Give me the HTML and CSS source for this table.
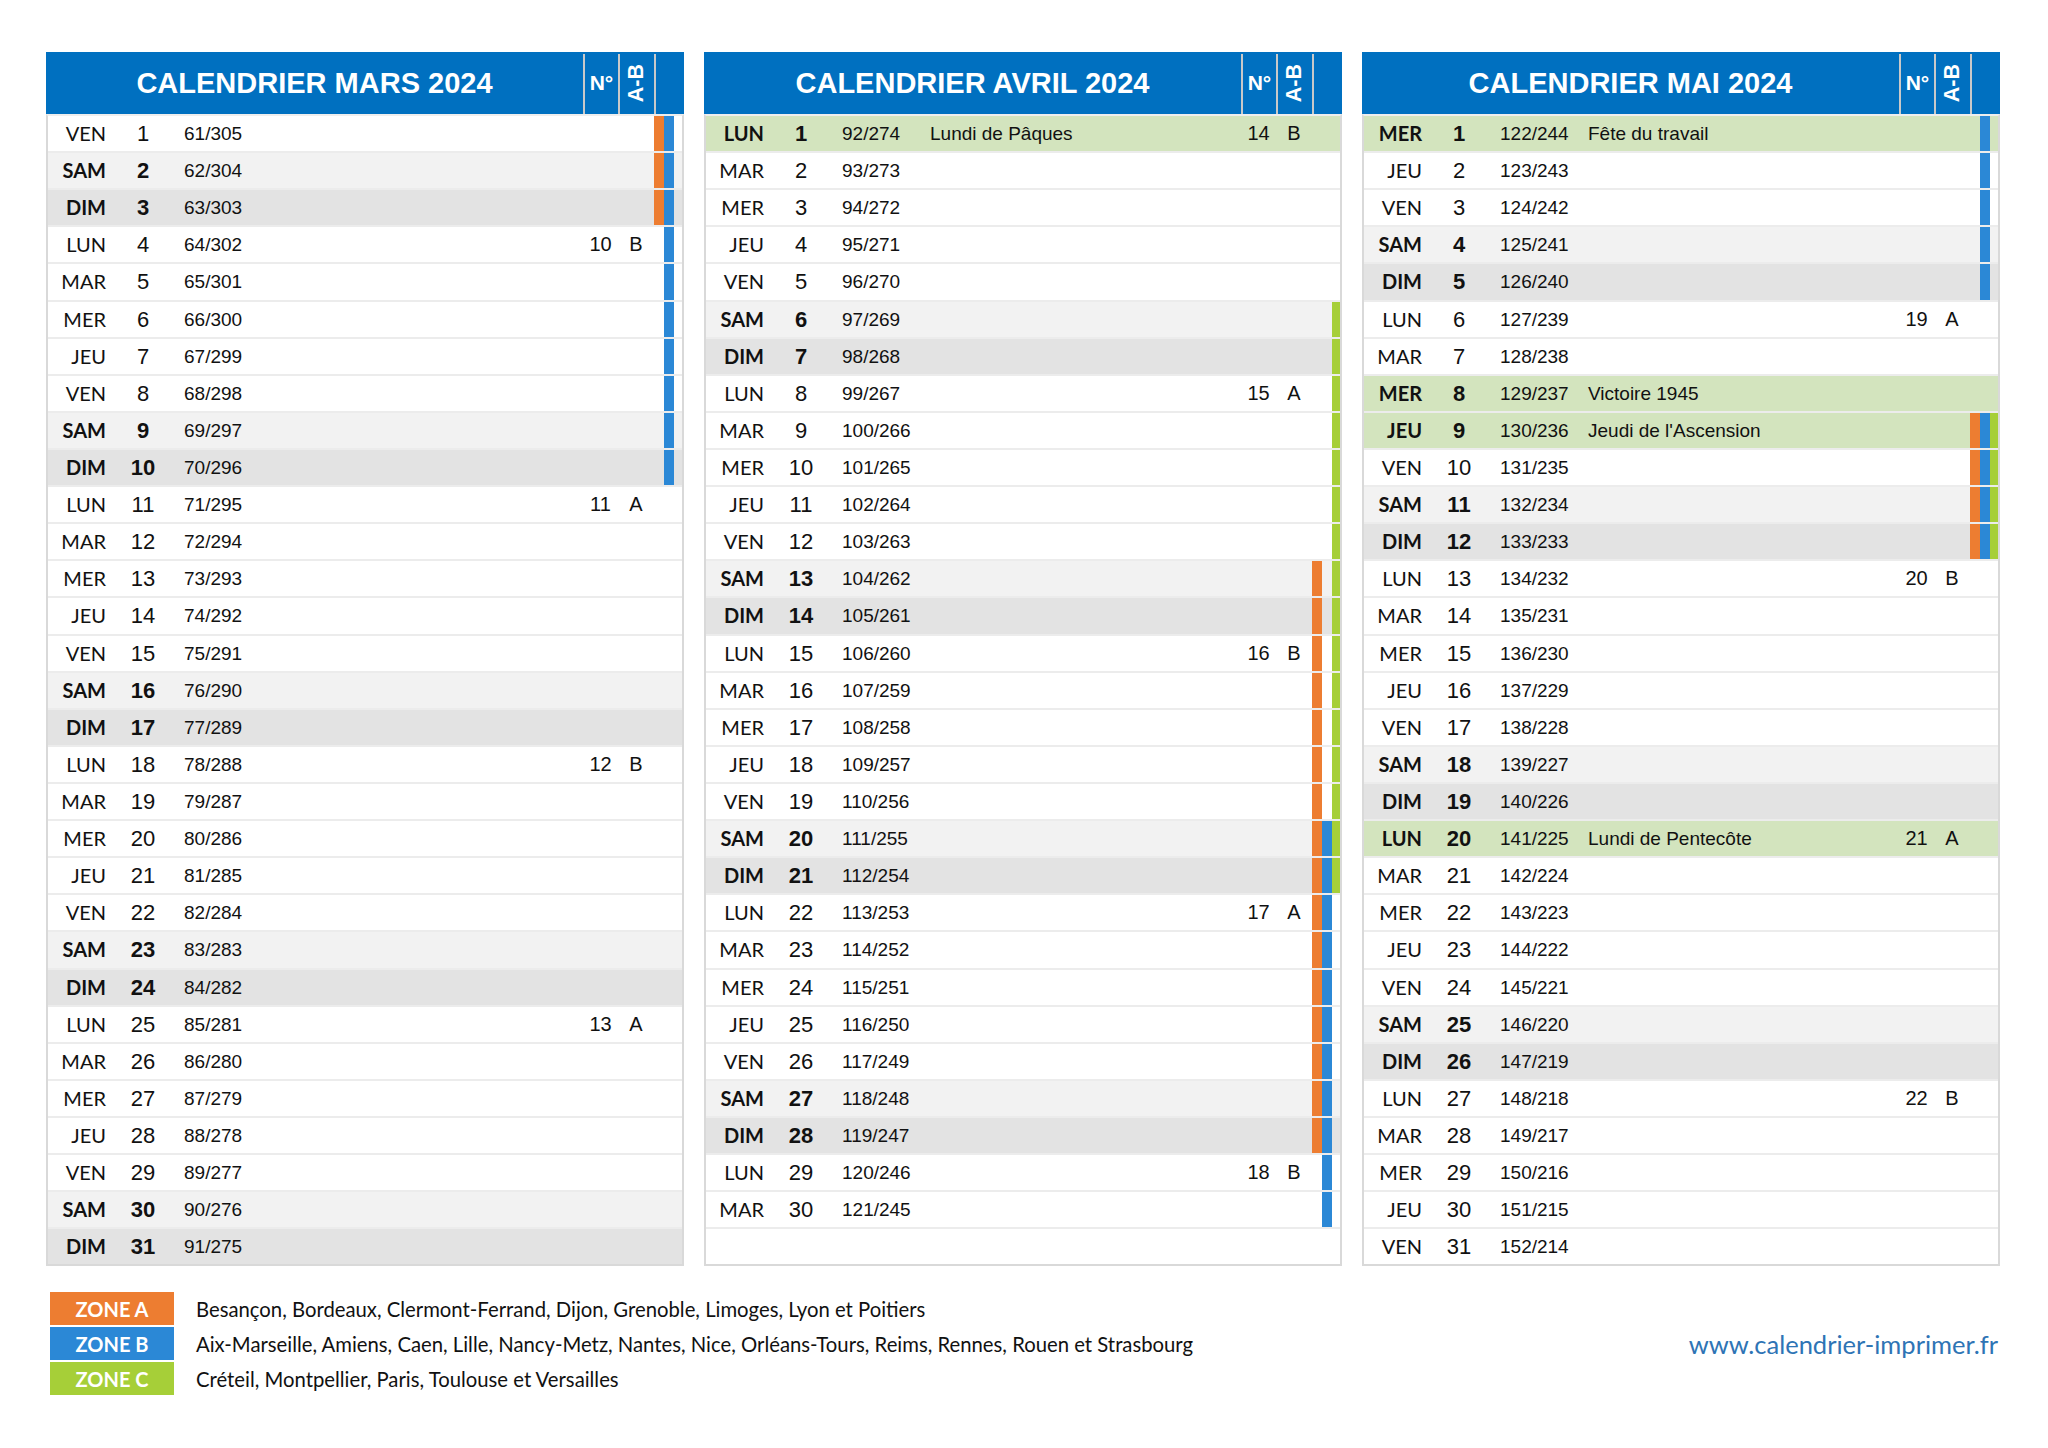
FILE: index.html
```html
<!DOCTYPE html>
<html lang="fr">
<head>
<meta charset="utf-8">
<title>Calendrier Mars Avril Mai 2024</title>
<link rel="stylesheet" href="styles.css">
</head>
<body>
<div class="page">
  <div class="months">
    <section class="month">
      <div class="head"><div class="title">CALENDRIER MARS 2024</div><div class="sep"></div><div class="no">N°</div><div class="sep"></div><div class="abh"><span>A-B</span></div><div class="sep"></div><div class="zh"></div></div>
      <div class="body">
        <div class="row"><span class="d">VEN</span><span class="n">1</span><span class="y">61/305</span><span class="z"><i class="a"></i><i class="b"></i></span></div>
        <div class="row sat"><span class="d">SAM</span><span class="n">2</span><span class="y">62/304</span><span class="z"><i class="a"></i><i class="b"></i></span></div>
        <div class="row sun"><span class="d">DIM</span><span class="n">3</span><span class="y">63/303</span><span class="z"><i class="a"></i><i class="b"></i></span></div>
        <div class="row"><span class="d">LUN</span><span class="n">4</span><span class="y">64/302</span><span class="w">10</span><span class="ab">B</span><span class="z"><i class="b"></i></span></div>
        <div class="row"><span class="d">MAR</span><span class="n">5</span><span class="y">65/301</span><span class="z"><i class="b"></i></span></div>
        <div class="row"><span class="d">MER</span><span class="n">6</span><span class="y">66/300</span><span class="z"><i class="b"></i></span></div>
        <div class="row"><span class="d">JEU</span><span class="n">7</span><span class="y">67/299</span><span class="z"><i class="b"></i></span></div>
        <div class="row"><span class="d">VEN</span><span class="n">8</span><span class="y">68/298</span><span class="z"><i class="b"></i></span></div>
        <div class="row sat"><span class="d">SAM</span><span class="n">9</span><span class="y">69/297</span><span class="z"><i class="b"></i></span></div>
        <div class="row sun"><span class="d">DIM</span><span class="n">10</span><span class="y">70/296</span><span class="z"><i class="b"></i></span></div>
        <div class="row"><span class="d">LUN</span><span class="n">11</span><span class="y">71/295</span><span class="w">11</span><span class="ab">A</span></div>
        <div class="row"><span class="d">MAR</span><span class="n">12</span><span class="y">72/294</span></div>
        <div class="row"><span class="d">MER</span><span class="n">13</span><span class="y">73/293</span></div>
        <div class="row"><span class="d">JEU</span><span class="n">14</span><span class="y">74/292</span></div>
        <div class="row"><span class="d">VEN</span><span class="n">15</span><span class="y">75/291</span></div>
        <div class="row sat"><span class="d">SAM</span><span class="n">16</span><span class="y">76/290</span></div>
        <div class="row sun"><span class="d">DIM</span><span class="n">17</span><span class="y">77/289</span></div>
        <div class="row"><span class="d">LUN</span><span class="n">18</span><span class="y">78/288</span><span class="w">12</span><span class="ab">B</span></div>
        <div class="row"><span class="d">MAR</span><span class="n">19</span><span class="y">79/287</span></div>
        <div class="row"><span class="d">MER</span><span class="n">20</span><span class="y">80/286</span></div>
        <div class="row"><span class="d">JEU</span><span class="n">21</span><span class="y">81/285</span></div>
        <div class="row"><span class="d">VEN</span><span class="n">22</span><span class="y">82/284</span></div>
        <div class="row sat"><span class="d">SAM</span><span class="n">23</span><span class="y">83/283</span></div>
        <div class="row sun"><span class="d">DIM</span><span class="n">24</span><span class="y">84/282</span></div>
        <div class="row"><span class="d">LUN</span><span class="n">25</span><span class="y">85/281</span><span class="w">13</span><span class="ab">A</span></div>
        <div class="row"><span class="d">MAR</span><span class="n">26</span><span class="y">86/280</span></div>
        <div class="row"><span class="d">MER</span><span class="n">27</span><span class="y">87/279</span></div>
        <div class="row"><span class="d">JEU</span><span class="n">28</span><span class="y">88/278</span></div>
        <div class="row"><span class="d">VEN</span><span class="n">29</span><span class="y">89/277</span></div>
        <div class="row sat"><span class="d">SAM</span><span class="n">30</span><span class="y">90/276</span></div>
        <div class="row sun last"><span class="d">DIM</span><span class="n">31</span><span class="y">91/275</span></div>
      </div>
    </section>

    <section class="month">
      <div class="head"><div class="title">CALENDRIER AVRIL 2024</div><div class="sep"></div><div class="no">N°</div><div class="sep"></div><div class="abh"><span>A-B</span></div><div class="sep"></div><div class="zh"></div></div>
      <div class="body">
        <div class="row hol"><span class="d">LUN</span><span class="n">1</span><span class="y">92/274</span><span class="h">Lundi de Pâques</span><span class="w">14</span><span class="ab">B</span></div>
        <div class="row"><span class="d">MAR</span><span class="n">2</span><span class="y">93/273</span></div>
        <div class="row"><span class="d">MER</span><span class="n">3</span><span class="y">94/272</span></div>
        <div class="row"><span class="d">JEU</span><span class="n">4</span><span class="y">95/271</span></div>
        <div class="row"><span class="d">VEN</span><span class="n">5</span><span class="y">96/270</span></div>
        <div class="row sat"><span class="d">SAM</span><span class="n">6</span><span class="y">97/269</span><span class="z"><i class="c"></i></span></div>
        <div class="row sun"><span class="d">DIM</span><span class="n">7</span><span class="y">98/268</span><span class="z"><i class="c"></i></span></div>
        <div class="row"><span class="d">LUN</span><span class="n">8</span><span class="y">99/267</span><span class="w">15</span><span class="ab">A</span><span class="z"><i class="c"></i></span></div>
        <div class="row"><span class="d">MAR</span><span class="n">9</span><span class="y">100/266</span><span class="z"><i class="c"></i></span></div>
        <div class="row"><span class="d">MER</span><span class="n">10</span><span class="y">101/265</span><span class="z"><i class="c"></i></span></div>
        <div class="row"><span class="d">JEU</span><span class="n">11</span><span class="y">102/264</span><span class="z"><i class="c"></i></span></div>
        <div class="row"><span class="d">VEN</span><span class="n">12</span><span class="y">103/263</span><span class="z"><i class="c"></i></span></div>
        <div class="row sat"><span class="d">SAM</span><span class="n">13</span><span class="y">104/262</span><span class="z"><i class="a"></i><i class="c"></i></span></div>
        <div class="row sun"><span class="d">DIM</span><span class="n">14</span><span class="y">105/261</span><span class="z"><i class="a"></i><i class="c"></i></span></div>
        <div class="row"><span class="d">LUN</span><span class="n">15</span><span class="y">106/260</span><span class="w">16</span><span class="ab">B</span><span class="z"><i class="a"></i><i class="c"></i></span></div>
        <div class="row"><span class="d">MAR</span><span class="n">16</span><span class="y">107/259</span><span class="z"><i class="a"></i><i class="c"></i></span></div>
        <div class="row"><span class="d">MER</span><span class="n">17</span><span class="y">108/258</span><span class="z"><i class="a"></i><i class="c"></i></span></div>
        <div class="row"><span class="d">JEU</span><span class="n">18</span><span class="y">109/257</span><span class="z"><i class="a"></i><i class="c"></i></span></div>
        <div class="row"><span class="d">VEN</span><span class="n">19</span><span class="y">110/256</span><span class="z"><i class="a"></i><i class="c"></i></span></div>
        <div class="row sat"><span class="d">SAM</span><span class="n">20</span><span class="y">111/255</span><span class="z"><i class="a"></i><i class="b"></i><i class="c"></i></span></div>
        <div class="row sun"><span class="d">DIM</span><span class="n">21</span><span class="y">112/254</span><span class="z"><i class="a"></i><i class="b"></i><i class="c"></i></span></div>
        <div class="row"><span class="d">LUN</span><span class="n">22</span><span class="y">113/253</span><span class="w">17</span><span class="ab">A</span><span class="z"><i class="a"></i><i class="b"></i></span></div>
        <div class="row"><span class="d">MAR</span><span class="n">23</span><span class="y">114/252</span><span class="z"><i class="a"></i><i class="b"></i></span></div>
        <div class="row"><span class="d">MER</span><span class="n">24</span><span class="y">115/251</span><span class="z"><i class="a"></i><i class="b"></i></span></div>
        <div class="row"><span class="d">JEU</span><span class="n">25</span><span class="y">116/250</span><span class="z"><i class="a"></i><i class="b"></i></span></div>
        <div class="row"><span class="d">VEN</span><span class="n">26</span><span class="y">117/249</span><span class="z"><i class="a"></i><i class="b"></i></span></div>
        <div class="row sat"><span class="d">SAM</span><span class="n">27</span><span class="y">118/248</span><span class="z"><i class="a"></i><i class="b"></i></span></div>
        <div class="row sun"><span class="d">DIM</span><span class="n">28</span><span class="y">119/247</span><span class="z"><i class="a"></i><i class="b"></i></span></div>
        <div class="row"><span class="d">LUN</span><span class="n">29</span><span class="y">120/246</span><span class="w">18</span><span class="ab">B</span><span class="z"><i class="b"></i></span></div>
        <div class="row"><span class="d">MAR</span><span class="n">30</span><span class="y">121/245</span><span class="z"><i class="b"></i></span></div>
        <div class="row empty"></div>
      </div>
    </section>

    <section class="month">
      <div class="head"><div class="title">CALENDRIER MAI 2024</div><div class="sep"></div><div class="no">N°</div><div class="sep"></div><div class="abh"><span>A-B</span></div><div class="sep"></div><div class="zh"></div></div>
      <div class="body">
        <div class="row hol"><span class="d">MER</span><span class="n">1</span><span class="y">122/244</span><span class="h">Fête du travail</span><span class="z"><i class="b"></i></span></div>
        <div class="row"><span class="d">JEU</span><span class="n">2</span><span class="y">123/243</span><span class="z"><i class="b"></i></span></div>
        <div class="row"><span class="d">VEN</span><span class="n">3</span><span class="y">124/242</span><span class="z"><i class="b"></i></span></div>
        <div class="row sat"><span class="d">SAM</span><span class="n">4</span><span class="y">125/241</span><span class="z"><i class="b"></i></span></div>
        <div class="row sun"><span class="d">DIM</span><span class="n">5</span><span class="y">126/240</span><span class="z"><i class="b"></i></span></div>
        <div class="row"><span class="d">LUN</span><span class="n">6</span><span class="y">127/239</span><span class="w">19</span><span class="ab">A</span></div>
        <div class="row"><span class="d">MAR</span><span class="n">7</span><span class="y">128/238</span></div>
        <div class="row hol"><span class="d">MER</span><span class="n">8</span><span class="y">129/237</span><span class="h">Victoire 1945</span></div>
        <div class="row hol"><span class="d">JEU</span><span class="n">9</span><span class="y">130/236</span><span class="h">Jeudi de l'Ascension</span><span class="z"><i class="a"></i><i class="b"></i><i class="c"></i></span></div>
        <div class="row"><span class="d">VEN</span><span class="n">10</span><span class="y">131/235</span><span class="z"><i class="a"></i><i class="b"></i><i class="c"></i></span></div>
        <div class="row sat"><span class="d">SAM</span><span class="n">11</span><span class="y">132/234</span><span class="z"><i class="a"></i><i class="b"></i><i class="c"></i></span></div>
        <div class="row sun"><span class="d">DIM</span><span class="n">12</span><span class="y">133/233</span><span class="z"><i class="a"></i><i class="b"></i><i class="c"></i></span></div>
        <div class="row"><span class="d">LUN</span><span class="n">13</span><span class="y">134/232</span><span class="w">20</span><span class="ab">B</span></div>
        <div class="row"><span class="d">MAR</span><span class="n">14</span><span class="y">135/231</span></div>
        <div class="row"><span class="d">MER</span><span class="n">15</span><span class="y">136/230</span></div>
        <div class="row"><span class="d">JEU</span><span class="n">16</span><span class="y">137/229</span></div>
        <div class="row"><span class="d">VEN</span><span class="n">17</span><span class="y">138/228</span></div>
        <div class="row sat"><span class="d">SAM</span><span class="n">18</span><span class="y">139/227</span></div>
        <div class="row sun"><span class="d">DIM</span><span class="n">19</span><span class="y">140/226</span></div>
        <div class="row hol"><span class="d">LUN</span><span class="n">20</span><span class="y">141/225</span><span class="h">Lundi de Pentecôte</span><span class="w">21</span><span class="ab">A</span></div>
        <div class="row"><span class="d">MAR</span><span class="n">21</span><span class="y">142/224</span></div>
        <div class="row"><span class="d">MER</span><span class="n">22</span><span class="y">143/223</span></div>
        <div class="row"><span class="d">JEU</span><span class="n">23</span><span class="y">144/222</span></div>
        <div class="row"><span class="d">VEN</span><span class="n">24</span><span class="y">145/221</span></div>
        <div class="row sat"><span class="d">SAM</span><span class="n">25</span><span class="y">146/220</span></div>
        <div class="row sun"><span class="d">DIM</span><span class="n">26</span><span class="y">147/219</span></div>
        <div class="row"><span class="d">LUN</span><span class="n">27</span><span class="y">148/218</span><span class="w">22</span><span class="ab">B</span></div>
        <div class="row"><span class="d">MAR</span><span class="n">28</span><span class="y">149/217</span></div>
        <div class="row"><span class="d">MER</span><span class="n">29</span><span class="y">150/216</span></div>
        <div class="row"><span class="d">JEU</span><span class="n">30</span><span class="y">151/215</span></div>
        <div class="row last"><span class="d">VEN</span><span class="n">31</span><span class="y">152/214</span></div>
      </div>
    </section>
  </div>

  <div class="legend">
    <div class="zones">
      <div class="zone"><span class="tag tag-a">ZONE A</span><span class="cities">Besançon, Bordeaux, Clermont-Ferrand, Dijon, Grenoble, Limoges, Lyon et Poitiers</span></div>
      <div class="zone"><span class="tag tag-b">ZONE B</span><span class="cities">Aix-Marseille, Amiens, Caen, Lille, Nancy-Metz, Nantes, Nice, Orléans-Tours, Reims, Rennes, Rouen et Strasbourg</span></div>
      <div class="zone"><span class="tag tag-c">ZONE C</span><span class="cities">Créteil, Montpellier, Paris, Toulouse et Versailles</span></div>
    </div>
    <div class="url">www.calendrier-imprimer.fr</div>
  </div>
</div>
</body>
</html>
```

FILE: styles.css
```css
* { box-sizing: content-box; }
body {
  margin: 0;
  background: #ffffff;
  color: #111111;
  font-family: "Liberation Sans", Arial, sans-serif;
}
.page {
  padding: 52px 0 0 46px;
}
.months {
  display: flex;
  gap: 20px;
}
.month {
  width: 638px;
}
.head {
  display: flex;
  height: 62px;
  background: #0070c0;
  color: #ffffff;
  font-weight: bold;
}
.title {
  width: 537px;
  display: flex;
  align-items: center;
  justify-content: center;
  font-size: 29px;
}
.sep {
  width: 2px;
  margin-top: 2px;
  background: #c9c9c9;
}
.no {
  width: 33px;
  display: flex;
  align-items: center;
  justify-content: center;
  font-size: 21px;
}
.abh {
  width: 34px;
  display: flex;
  align-items: center;
  justify-content: center;
}
.abh span {
  writing-mode: vertical-rl;
  transform: rotate(180deg);
  font-size: 21.5px;
  line-height: 1;
}
.zh { width: 28px; }
.body {
  border: 2px solid #d9d9d9;
  border-top: 2px solid #eeeeee;
}
.row {
  display: grid;
  grid-template-columns: 58px 58px 108px 311px 35px 36px 28px;
  height: 35.12px;
  line-height: 35px;
  border-bottom: 2px solid #ececec;
}
.row.last, .row.empty { border-bottom: 0; }
.row > * { grid-row: 1; white-space: nowrap; }
.d {
  grid-column: 1;
  text-align: right;
  font-family: "Lato", "Liberation Sans", sans-serif;
  font-size: 20px;
}
.n {
  grid-column: 2;
  padding-left: 16px;
  text-align: center;
  font-size: 22px;
}
.y {
  grid-column: 3;
  padding-left: 20px;
  font-size: 19px;
}
.h {
  grid-column: 4;
  font-size: 19px;
}
.w {
  grid-column: 5;
  text-align: center;
  font-size: 20px;
}
.ab {
  grid-column: 6;
  text-align: center;
  font-size: 20px;
}
.z {
  grid-column: 7;
  display: grid;
  grid-template-columns: 10px 10px 8px;
  height: 35.12px;
}
.z i { display: block; height: 100%; grid-row: 1; }
.z .a { grid-column: 1; background: #ed7d31; }
.z .b { grid-column: 2; background: #2b88d6; }
.z .c { grid-column: 3; background: #a6cf38; }
.sat { background: #f2f2f2; }
.sun { background: #e3e3e3; }
.hol { background: #d3e4be; }
.sat .d, .sat .n, .sun .d, .sun .n, .hol .d, .hol .n { font-weight: bold; }

.legend {
  display: flex;
  justify-content: space-between;
  align-items: center;
  width: 1948px;
  margin: 26px 0 0 4px;
}
.zones {
  display: flex;
  flex-direction: column;
  gap: 2px;
}
.zone {
  display: flex;
  align-items: center;
}
.tag {
  width: 124px;
  height: 33px;
  display: flex;
  align-items: center;
  justify-content: center;
  color: #ffffff;
  font-family: "Lato", "Liberation Sans", sans-serif;
  font-weight: bold;
  font-size: 20px;
}
.tag-a { background: #ed7d31; }
.tag-b { background: #2b88d6; }
.tag-c { background: #a6cf38; }
.cities {
  margin-left: 22px;
  font-family: "Lato", "Liberation Sans", sans-serif;
  font-size: 20.3px;
  color: #111111;
}
.url {
  font-family: "Lato", "Liberation Sans", sans-serif;
  font-size: 25.5px;
  color: #2e74b5;
}
```
